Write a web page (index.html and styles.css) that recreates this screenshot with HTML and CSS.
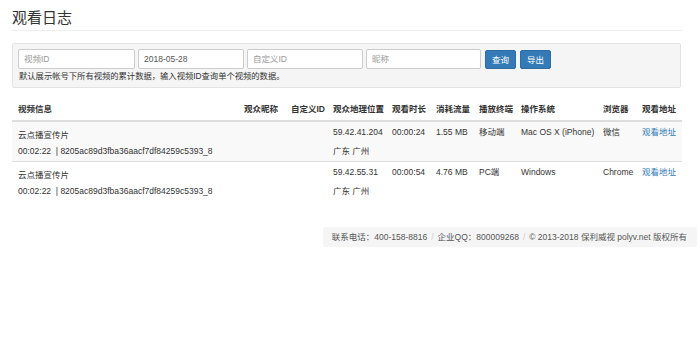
FILE: index.html
```html
<!DOCTYPE html>
<html lang="zh">
<head>
<meta charset="utf-8">
<link rel="stylesheet" href="styles.css">
</head>
<body>
<div class="page">
  <h1 class="title">观看日志</h1>
  <div class="well">
    <div class="filters">
      <input class="field w1" type="text" placeholder="视频ID">
      <input class="field w2" type="text" value="2018-05-28">
      <input class="field w3" type="text" placeholder="自定义ID">
      <input class="field w4" type="text" placeholder="昵称">
      <button class="btn">查询</button>
      <button class="btn">导出</button>
    </div>
    <p class="help">默认展示帐号下所有视频的累计数据，输入视频ID查询单个视频的数据。</p>
  </div>
  <table class="log">
    <colgroup>
      <col class="c1"><col class="c2"><col class="c3"><col class="c4"><col class="c5">
      <col class="c6"><col class="c7"><col class="c8"><col class="c9"><col class="c10">
    </colgroup>
    <thead>
      <tr>
        <th>视频信息</th><th>观众昵称</th><th>自定义ID</th><th>观众地理位置</th><th>观看时长</th>
        <th>消耗流量</th><th>播放终端</th><th>操作系统</th><th>浏览器</th><th>观看地址</th>
      </tr>
    </thead>
    <tbody>
      <tr class="odd">
        <td><div class="vname">云点播宣传片</div><div class="vid">00:02:22 &nbsp;|&nbsp;8205ac89d3fba36aacf7df84259c5393_8</div></td>
        <td></td><td></td>
        <td><div>59.42.41.204</div><div>广东 广州</div></td>
        <td>00:00:24</td><td>1.55 MB</td><td>移动端</td><td>Mac OS X (iPhone)</td><td>微信</td>
        <td><a href="#">观看地址</a></td>
      </tr>
      <tr>
        <td><div class="vname">云点播宣传片</div><div class="vid">00:02:22 &nbsp;|&nbsp;8205ac89d3fba36aacf7df84259c5393_8</div></td>
        <td></td><td></td>
        <td><div>59.42.55.31</div><div>广东 广州</div></td>
        <td>00:00:54</td><td>4.76 MB</td><td>PC端</td><td>Windows</td><td>Chrome</td>
        <td><a href="#">观看地址</a></td>
      </tr>
    </tbody>
  </table>
  <div class="footer-row">
    <div class="footer">
      <span>联系电话：400-158-8816</span><span class="sep">/</span><span>企业QQ：800009268</span><span class="sep">/</span><span>© 2013-2018 保利威视 polyv.net 版权所有</span>
    </div>
  </div>
</div>
</body>
</html>
```
FILE: styles.css
```css
* { box-sizing: border-box; }
body {
  margin: 0;
  font-family: "Liberation Sans", "Noto Sans CJK SC", sans-serif;
  font-size: 8.5px;
  color: #333;
  background: #fff;
}
.page { padding: 0 0 0 12px; width: 700px; }
.title {
  margin: 0;
  width: 670px;
  padding: 9px 0 3px;
  font-size: 15px;
  line-height: 18px;
  font-weight: normal;
  color: #333;
  border-bottom: 1px solid #eee;
}
.well {
  margin-top: 12px;
  width: 669px;
  height: 45px;
  background: #f5f5f5;
  border: 1px solid #e3e3e3;
  border-radius: 2px;
  padding: 5px 5px 0;
}
.filters { display: flex; gap: 3px; align-items: center; }
.field {
  height: 20px;
  border: 1px solid #ccc;
  border-radius: 2px;
  background: #fff;
  padding: 0 5px;
  font-family: inherit;
  font-size: 8.5px;
  color: #555;
  outline: none;
}
.field::placeholder { color: #999; }
.w1 { width: 117px; }
.w2 { width: 106px; }
.w3 { width: 116px; }
.w4 { width: 115px; }
.btn {
  height: 19px;
  padding: 0 6px;
  margin-left: 1px;
  background: #337ab7;
  border: 1px solid #2e6da4;
  border-radius: 2px;
  color: #fff;
  font-family: inherit;
  font-size: 8.5px;
  cursor: pointer;
}
.help { margin: 1px 0 0 1px; line-height: 12px; color: #333; font-size: 8.3px; }
.log {
  margin-top: 12px;
  width: 670px;
  border-collapse: collapse;
  table-layout: fixed;
}
.c1 { width: 226px; }
.c2 { width: 47px; }
.c3 { width: 42px; }
.c4 { width: 59px; }
.c5 { width: 44px; }
.c6 { width: 43px; }
.c7 { width: 42px; }
.c8 { width: 82px; }
.c9 { width: 39px; }
.c10 { width: 46px; }
.log th {
  text-align: left;
  font-weight: bold;
  padding: 0 6px 1px;
  line-height: 19px;
  border-bottom: 2px solid #ddd;
  white-space: nowrap;
}
.log td {
  padding: 1px 6px 0;
  line-height: 19px;
  vertical-align: top;
  white-space: nowrap;
  border-top: 1px solid #ddd;
  color: #333;
}
.log td .vname { margin-top: 4px; line-height: 16px; }
.log td .vid { line-height: 16px; }
.log thead + tbody tr:first-child td { border-top: 0; }
.log tr.odd td { background: #f9f9f9; }
.log td a { color: #337ab7; text-decoration: none; }
.footer-row {
  display: flex;
  justify-content: flex-end;
  margin-top: 26px;
  padding-right: 3px;
}
.footer {
  background: #f5f5f5;
  border-radius: 2px;
  padding: 0 10px 0 9px;
  height: 20px;
  line-height: 20px;
  color: #555;
  white-space: nowrap;
}
.sep { color: #ccc; padding: 0 4px; }
```
